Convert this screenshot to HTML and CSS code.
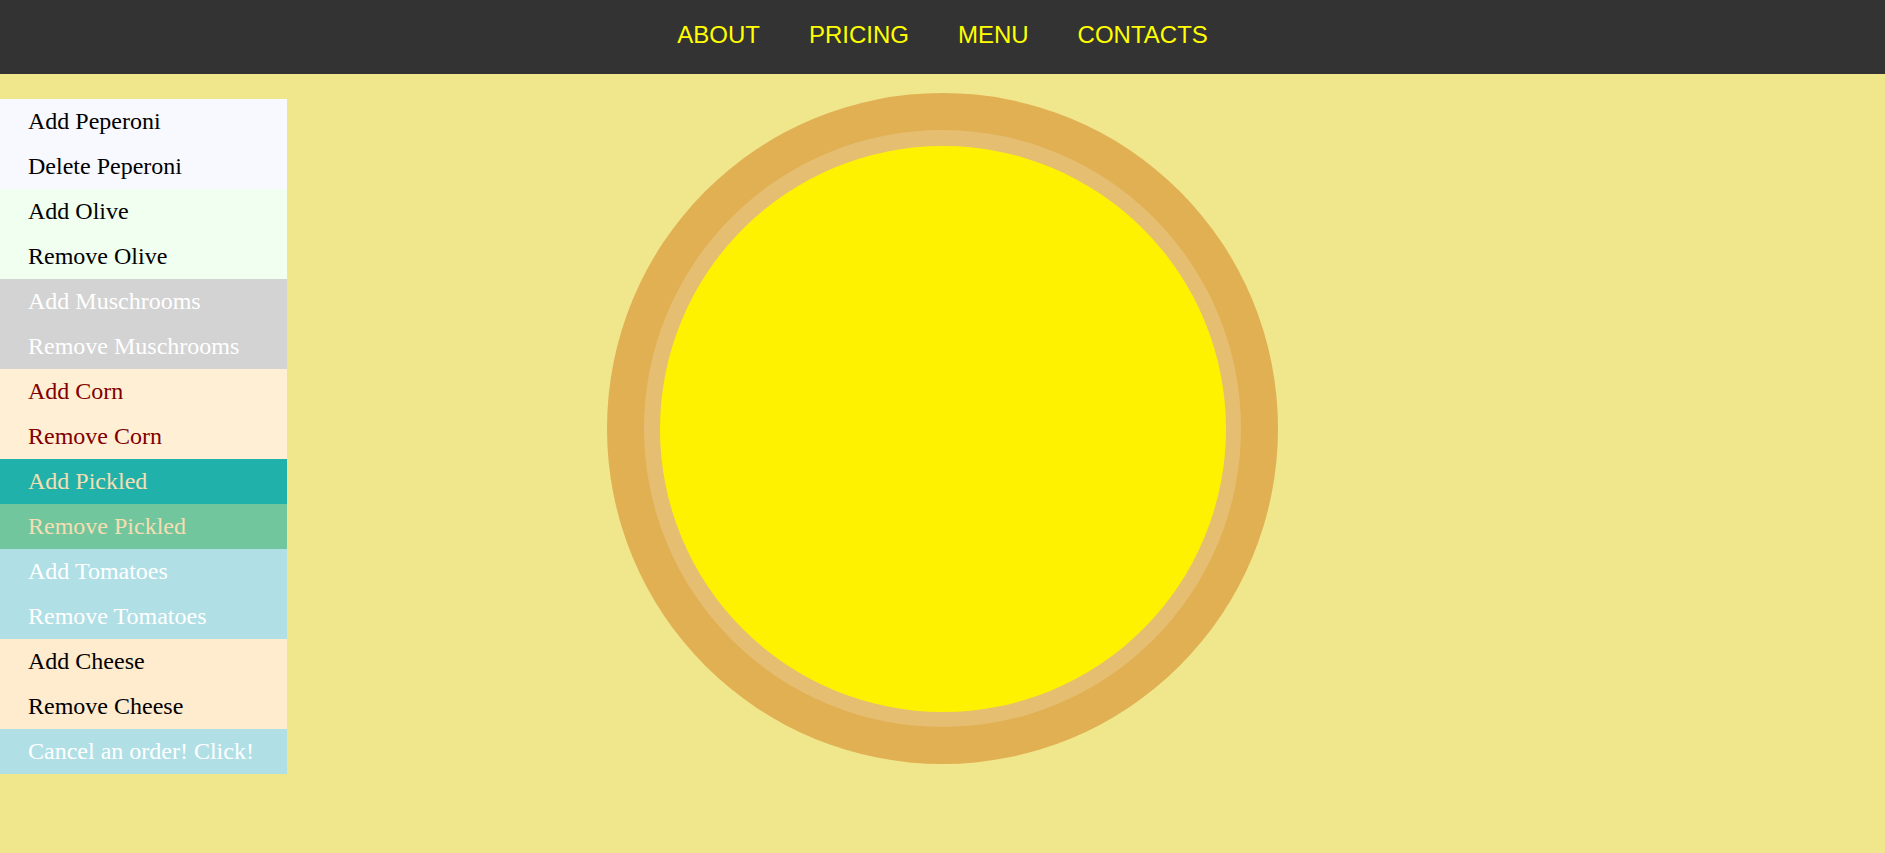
FILE: index.html
```html
<!DOCTYPE html>
<html lang="en">
<head>
<meta charset="utf-8">
<title>Pizza</title>
<link rel="stylesheet" href="styles.css">
</head>
<body>
<header class="topbar">
  <nav class="nav">
    <a class="nav-link" href="#">ABOUT</a>
    <a class="nav-link" href="#">PRICING</a>
    <a class="nav-link" href="#">MENU</a>
    <a class="nav-link" href="#">CONTACTS</a>
  </nav>
</header>
<main class="layout">
  <aside class="menu">
    <a class="item pep" href="#">Add Peperoni</a>
    <a class="item pep" href="#">Delete Peperoni</a>
    <a class="item olive" href="#">Add Olive</a>
    <a class="item olive" href="#">Remove Olive</a>
    <a class="item mush" href="#">Add Muschrooms</a>
    <a class="item mush" href="#">Remove Muschrooms</a>
    <a class="item corn" href="#">Add Corn</a>
    <a class="item corn" href="#">Remove Corn</a>
    <a class="item pickled-add" href="#">Add Pickled</a>
    <a class="item pickled-remove" href="#">Remove Pickled</a>
    <a class="item tomato" href="#">Add Tomatoes</a>
    <a class="item tomato" href="#">Remove Tomatoes</a>
    <a class="item cheese" href="#">Add Cheese</a>
    <a class="item cheese" href="#">Remove Cheese</a>
    <a class="item cancel" href="#">Cancel an order! Click!</a>
  </aside>
  <section class="pizza-area">
    <div class="crust">
      <div class="rim">
        <div class="sauce"></div>
      </div>
    </div>
  </section>
</main>
</body>
</html>
```
FILE: styles.css
```css
html, body {
  margin: 0;
  padding: 0;
}
body {
  background: #f0e68c;
  min-height: 853px;
  font-family: "Liberation Serif", "Times New Roman", serif;
}
.topbar {
  background: #333333;
  height: 74px;
  box-sizing: border-box;
  padding-top: 21px;
  display: flex;
  align-items: flex-start;
  justify-content: center;
}
.nav {
  display: flex;
  gap: 49px;
}
.nav-link {
  font-family: "Liberation Sans", Arial, sans-serif;
  font-size: 24px;
  color: #ffff00;
  text-decoration: none;
}
.layout {
  display: grid;
  grid-template-columns: 1fr auto 1fr;
  align-items: start;
}
.menu {
  grid-column: 1;
  justify-self: start;
  width: 287px;
  margin-top: 25px;
  display: flex;
  flex-direction: column;
}
.item {
  display: block;
  height: 45px;
  box-sizing: border-box;
  padding: 9px 0 0 28px;
  font-size: 24px;
  line-height: 27px;
  text-decoration: none;
  color: #000;
}
.pep { background: #f8f8ff; color: #000; }
.olive { background: #f0fff0; color: #000; }
.mush { background: #d3d3d3; color: #fff; }
.corn { background: #ffefd5; color: #800000; }
.pickled-add { background: #20b2aa; color: #f5deb3; }
.pickled-remove { background: #72c69d; color: #f5deb3; }
.tomato { background: #b0e0e6; color: #fff; }
.cheese { background: #ffebcd; color: #000; }
.cancel { background: #b0e0e6; color: #fff; }
.pizza-area {
  grid-column: 2;
  margin-top: 19px;
}
.crust {
  width: 671px;
  height: 671px;
  border-radius: 50%;
  background: #e0b052;
  display: flex;
  align-items: center;
  justify-content: center;
}
.rim {
  width: 597px;
  height: 597px;
  border-radius: 50%;
  background: #e5be72;
  display: flex;
  align-items: center;
  justify-content: center;
}
.sauce {
  width: 566px;
  height: 566px;
  border-radius: 50%;
  background: #fff200;
}
```
